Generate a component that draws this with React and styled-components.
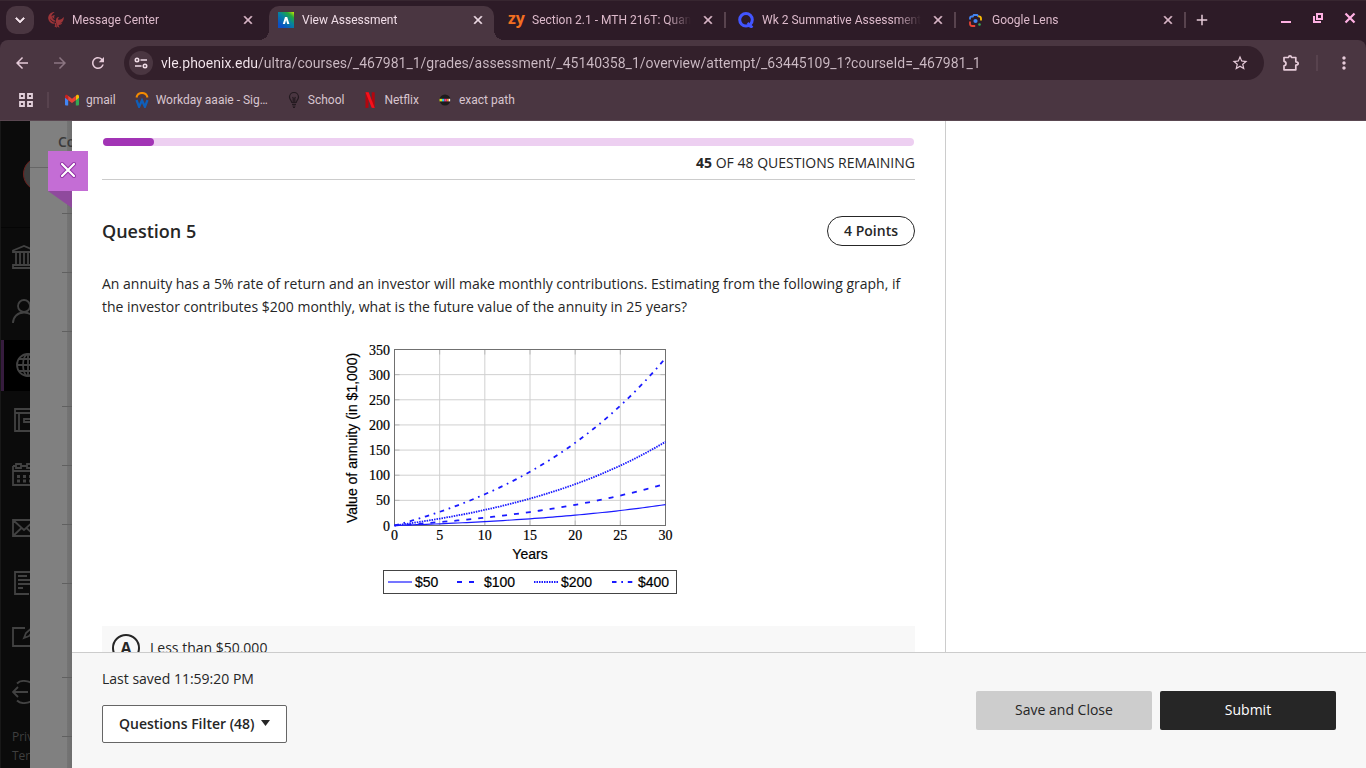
import React from "react";
import styled, { createGlobalStyle } from "styled-components";
import {
  MdAdd,
  MdArrowBack,
  MdArrowForward,
  MdClose,
  MdKeyboardArrowDown,
  MdMoreVert,
  MdRefresh,
  MdStarBorder,
} from "react-icons/md";

const GlobalStyle = createGlobalStyle`
  * {
    box-sizing: border-box;
  }

  body {
    margin: 0;
    font-family: "Open Sans", sans-serif;
    font-size: 14px;
    color: #262626;
  }

  button, input {
    font: inherit;
  }
`;

const Window = styled.div`
  display: flex;
  flex-direction: column;
  height: 100vh;
  overflow: hidden;
`;

/* ---------- browser chrome ---------- */

const Chrome = styled.header`
  background: #2d1b27;
  font-family: Roboto, sans-serif;
  font-size: 12px;
  color: #dcc2d0;
`;

const PlainButton = styled.button`
  display: flex;
  align-items: center;
  justify-content: center;
  flex: none;
  width: ${(p) => p.$w || 24}px;
  height: ${(p) => p.$h || 24}px;
  padding: 0;
  border: 0;
  background: none;
  color: ${(p) => p.$color || "#e6cbd9"};
`;

const TabStrip = styled.div`
  display: flex;
  align-items: stretch;
  height: 40px;
  padding: 0 4px 0 6px;
  border-top: 1px solid #372630;
`;

const TabSearch = styled(PlainButton)`
  margin: 5px 5px 0 0;
  border-radius: 10px;
  background: #4a3641;
  color: #f4e4ec;

  path:last-child {
    stroke-width: 1;
  }
`;

const TabSlot = styled.div`
  display: flex;
  flex: 0 1 230px;
  min-width: 0;
  padding-top: 5px;
`;

const TabBody = styled.div`
  position: relative;
  display: flex;
  align-items: center;
  gap: 8px;
  flex: 1;
  min-width: 0;
  padding: 0 7px 6px 9px;
  border-radius: 10px 10px 0 0;
  background: ${(p) => (p.$active ? "#4a3641" : "none")};
  color: ${(p) => (p.$active ? "#f0dde7" : "#dcb9ca")};

  &::before,
  &::after {
    content: "";
    display: ${(p) => (p.$active ? "block" : "none")};
    position: absolute;
    bottom: 0;
    width: 10px;
    height: 10px;
  }

  &::before {
    left: -10px;
    background: radial-gradient(circle at 0 0, transparent 10px, #4a3641 10px);
  }

  &::after {
    right: -10px;
    background: radial-gradient(circle at 100% 0, transparent 10px, #4a3641 10px);
  }
`;

const TabTitle = styled.span`
  flex: 1;
  overflow: hidden;
  white-space: nowrap;
  line-height: 16px;
  mask-image: linear-gradient(to left, transparent, #000 24px);
`;

const TabClose = styled(PlainButton)`
  color: inherit;

  path:last-child {
    stroke-width: 1;
  }
`;

const Divider = styled.span`
  flex: none;
  align-self: center;
  width: 2px;
  height: 16px;
  margin: ${(p) => p.$margin || "0"};
  background: ${(p) => (p.$hidden ? "transparent" : "#58434e")};
`;

const WindowControls = styled.div`
  display: flex;
  align-items: center;
  gap: 8px;
  height: 33px;
  margin-left: auto;
`;

const Toolbar = styled.div`
  display: flex;
  align-items: center;
  height: 46px;
  padding: 0 10px;
  border-radius: 8px 8px 0 0;
  background: #4a3641;
`;

const NavButtons = styled.div`
  display: flex;
  gap: 14px;
  margin-right: 14px;
`;

const Omnibox = styled.div`
  display: flex;
  align-items: center;
  flex: 1;
  height: 34px;
  padding: 0 12px 0 5px;
  border-radius: 17px;
  background: #33202b;
`;

const SiteInfo = styled(PlainButton)`
  margin-right: 8px;
  border-radius: 50%;
  background: #4a3641;
`;

const UrlInput = styled.input`
  flex: 1;
  min-width: 0;
  padding: 0;
  border: 0;
  outline: 0;
  font-size: 14px;
  line-height: 20px;
  color: transparent;
  background: linear-gradient(to right, #f6e8ef 97px, #cdbbc5 97px);
  background-clip: text;
`;

const Bookmarks = styled.nav`
  display: flex;
  align-items: center;
  gap: 18px;
  height: 35px;
  padding: 0 18px 7px;
  border-bottom: 1px solid #5a4751;
  background: #4a3641;
`;

const Bookmark = styled.a`
  display: flex;
  align-items: center;
  gap: 6px;
  line-height: 16px;
  color: #d8c5cf;
  text-decoration: none;
`;

function PhoenixIcon() {
  return (
    <svg width="16" height="16" viewBox="0 0 16 16" fill="#9c3438">
      <path d="M5.800 0C2.500.4 0 3.200.2 6.500.4 9 2.500 11.300 5.500 12l.8-1.200C4 10 2.300 8.500 2 6.500 3.200 8.600 5 9.600 6.800 9.800L7.200 8.500C5 7.800 4 6.300 4.400 4.300 4.700 5.800 5.500 6.500 6.500 6.700 6 5.500 6 4.200 6.800 3 5.500 3.100 4.200 3.600 3.300 4.500 3.700 2.500 4.800 1 6.500.5z" />
      <path d="M7.500 9.500C8.200 8.500 8 7.300 8.500 6.300 9 5.300 10 5 11.300 5.700L10 6.500c-.2 1 .3 1.400 1.200 1.300 1.700-.2 3.300-1.200 4.600-2.800.3 3-1.300 5.300-3.800 6.300 1.200.1 1.800-.2 2.500-.8-.8 1.800-2.300 2.600-4 2.500l1 2.700-2.200-1-.4-2.200z" />
      <path d="M6 10.500l2.300.8.700 4.500-2.500-1.200.8-1.600z" />
    </svg>
  );
}

function BlackboardIcon() {
  return (
    <svg width="16" height="16" viewBox="0 0 16 16">
      <defs>
        <linearGradient id="bb" x1="1" y1="0" x2="0.250" y2="0.900">
          <stop offset="0" stopColor="#d2ea00" />
          <stop offset="0.250" stopColor="#23a83c" />
          <stop offset="0.550" stopColor="#0683a0" />
          <stop offset="1" stopColor="#0b50c4" />
        </linearGradient>
      </defs>
      <path d="M0 0h16v16H0z" fill="url(#bb)" />
      <path d="M4.800 12L7 5h2.200l2.200 7H9.200L8.100 8l-1.100 4z" fill="#fff" />
    </svg>
  );
}

const ZyMark = styled.span`
  width: 16px;
  height: 24px;
  font-family: "Open Sans", sans-serif;
  font-size: 16px;
  font-weight: 700;
  line-height: 20px;
  color: #f26f21;
`;

function QIcon() {
  return (
    <svg width="16" height="16" viewBox="0 0 16 16" fill="none" stroke="#4255ff" strokeWidth="3">
      <circle cx="8" cy="7.800" r="6.300" />
      <path d="M10 13.300l4.500 2.200M9.500 11l5 4.500" strokeWidth="2.400" />
    </svg>
  );
}

function LensIcon() {
  return (
    <svg width="16" height="16" viewBox="0 0 16 16" fill="none" strokeWidth="1.800">
      <path d="M2 7.500V6.200Q2 4.500 3.700 4.500h1.100l1-1.500h3.400l1 1.500" stroke="#4285f4" />
      <path d="M10.200 4.400h.6q2.200 0 2.200 2.200v2" stroke="#fbbc04" />
      <path d="M2 9.500v2.300Q2 14 4.200 14h3" stroke="#ea4335" />
      <circle cx="7.500" cy="9" r="2.100" fill="#4285f4" />
      <circle cx="11.500" cy="12.500" r="1.300" fill="#34a853" />
    </svg>
  );
}

function TuneIcon() {
  return (
    <svg width="14" height="14" viewBox="0 0 14 14" fill="none" stroke="#f0dde7" strokeWidth="1.600">
      <circle cx="3" cy="4" r="1.700" />
      <path d="M6.500 4H13M1 10h6.500" />
      <circle cx="11" cy="10" r="1.700" />
    </svg>
  );
}

function PuzzleIcon() {
  return (
    <svg width="18" height="18" viewBox="0 0 18 18" fill="none" stroke="#e6cbd9" strokeWidth="1.700" strokeLinejoin="round">
      <path d="M2 3.500h4.500Q6.700 1.800 8 1.800t1.500 1.700h4.300v4.300q2.400.2 2.400 1.700t-2.400 1.700v4.600H2v-4q2-.3 2-2.300T2 7.300z" />
    </svg>
  );
}

function AppsIcon() {
  return (
    <svg width="16" height="16" viewBox="0 0 16 16" fill="none" stroke="#e2d0da" strokeWidth="1.800">
      <path d="M2 2h4v4H2zM10 2h4v4h-4zM2 10h4v4H2zM10 10h4v4h-4z" />
    </svg>
  );
}

function GmailIcon() {
  return (
    <svg width="16" height="16" viewBox="0 0 16 16">
      <path d="M1 4v8.500q0 1 1 1h2.200V6.500z" fill="#4285f4" />
      <path d="M15 4v8.500q0 1-1 1h-2.200V6.500z" fill="#34a853" />
      <path d="M11.800 4v4.200L15 5.800V4.300c0-1.600-1.500-2-2.400-1.300z" fill="#fbbc04" />
      <path d="M1 4.300v1.500l3.200 2.400V4l-.8-1C2.300 2.200 1 2.800 1 4.300z" fill="#c5221f" />
      <path d="M4.200 3.800L8 6.700l3.800-2.900v4.400L8 11 4.200 8.200z" fill="#ea4335" />
    </svg>
  );
}

function WorkdayIcon() {
  return (
    <svg width="16" height="16" viewBox="0 0 16 16" fill="none">
      <path d="M2.500 5.500a5.600 5.600 0 0 1 11 0" stroke="#f38b00" strokeWidth="2" />
      <path d="M2.500 8l2.600 6.800L8 8.300l2.900 6.500L13.500 8" stroke="#0f5fb9" strokeWidth="2.300" />
    </svg>
  );
}

function BulbIcon() {
  return (
    <svg width="16" height="16" viewBox="0 0 16 16" fill="none" stroke="#241a20" strokeWidth="1.200">
      <path d="M5.800 10.500C5.600 8.300 3.500 7.600 3.500 5a4.500 4.500 0 0 1 9 0c0 2.600-2.100 3.300-2.300 5.500zM6 12.300h4M6.500 14h3M7.200 10V6M8.800 10V6M6.500 5l1 1.500M9.500 5l-1 1.500" />
      <path d="M7 15.300h2" />
    </svg>
  );
}

function NetflixIcon() {
  return (
    <svg width="16" height="16" viewBox="0 0 16 16">
      <path d="M3.500.3h3v15.400l-3 .3zM9.700.3h3V16l-3-.3z" fill="#b1060f" />
      <path d="M3.500.3h3.200L12.700 16l-3-.3z" fill="#f5101b" />
    </svg>
  );
}

function ExactPathIcon() {
  return (
    <svg width="16" height="16" viewBox="0 0 16 16">
      <circle cx="8" cy="8" r="5.500" fill="#1d1a1c" />
      <path d="M2.500 6.800H5v2.600H2.500z" fill="#d8e021" />
      <path d="M5 6.800h2.300v2.600H5z" fill="#29c5e6" />
      <path d="M7.300 6.800h2.300v2.600H7.300z" fill="#f0369b" />
      <path d="M9.600 6.800h2v2.600h-2z" fill="#ff7a2f" />
      <path d="M11.600 6.800h1.600v2.600h-1.600z" fill="#f8f8f8" />
    </svg>
  );
}

const tabs = [
  { title: "Message Center", icon: <PhoenixIcon /> },
  { title: "View Assessment", icon: <BlackboardIcon />, active: true },
  {
    title: "Section 2.1 - MTH 216T: Quantitative",
    icon: <ZyMark>zy</ZyMark>,
    divider: true,
  },
  { title: "Wk 2 Summative Assessment", icon: <QIcon />, divider: true },
  { title: "Google Lens", icon: <LensIcon />, divider: true },
];

const bookmarks = [
  { title: "gmail", icon: <GmailIcon /> },
  { title: "Workday aaaie - Sig…", icon: <WorkdayIcon /> },
  { title: "School", icon: <BulbIcon /> },
  { title: "Netflix", icon: <NetflixIcon /> },
  { title: "exact path", icon: <ExactPathIcon /> },
];

function BrowserChrome() {
  return (
    <Chrome>
      <TabStrip>
        <TabSearch $w={28} $h={28} aria-label="Search tabs">
          <MdKeyboardArrowDown size={18} />
        </TabSearch>
        {tabs.map((tab) => (
          <TabSlot key={tab.title}>
            <TabBody $active={tab.active}>
              {tab.icon}
              <TabTitle>{tab.title}</TabTitle>
              <TabClose $w={18} $h={18} aria-label="Close tab">
                <MdClose size={14} />
              </TabClose>
            </TabBody>
            <Divider $hidden={!tab.divider} $margin="0 3px 7px 0" />
          </TabSlot>
        ))}
        <PlainButton $w={26} $h={38} aria-label="New tab">
          <MdAdd size={18} />
        </PlainButton>
        <WindowControls>
          <PlainButton $color="#ffb1e3" aria-label="Minimize">
            <svg width="12" height="12" viewBox="0 0 12 12" fill="currentColor">
              <path d="M1 9h10v2H1z" />
            </svg>
          </PlainButton>
          <PlainButton $color="#ffb1e3" aria-label="Restore">
            <svg width="12" height="12" viewBox="0 0 12 12" fill="none" stroke="currentColor" strokeWidth="2">
              <path d="M5 2h5v5H5z" />
              <path d="M2 4v6h7" />
            </svg>
          </PlainButton>
          <PlainButton $color="#ffb1e3" aria-label="Close window">
            <svg width="12" height="12" viewBox="0 0 12 12" stroke="currentColor" strokeWidth="2.200">
              <path d="M1.500 1.500l9 9M10.500 1.500l-9 9" />
            </svg>
          </PlainButton>
        </WindowControls>
      </TabStrip>
      <Toolbar>
        <NavButtons>
          <PlainButton aria-label="Back">
            <MdArrowBack size={18} />
          </PlainButton>
          <PlainButton $color="#8c7682" aria-label="Forward">
            <MdArrowForward size={18} />
          </PlainButton>
          <PlainButton aria-label="Reload">
            <MdRefresh size={18} />
          </PlainButton>
        </NavButtons>
        <Omnibox>
          <SiteInfo aria-label="Site information">
            <TuneIcon />
          </SiteInfo>
          <UrlInput
            aria-label="Address"
            defaultValue="vle.phoenix.edu/ultra/courses/_467981_1/grades/assessment/_45140358_1/overview/attempt/_63445109_1?courseId=_467981_1"
          />
          <PlainButton aria-label="Bookmark this page">
            <MdStarBorder size={18} />
          </PlainButton>
        </Omnibox>
        <PlainButton $w={54} aria-label="Extensions">
          <PuzzleIcon />
        </PlainButton>
        <Divider $margin="0 14px 0 -2px" />
        <PlainButton aria-label="Menu">
          <MdMoreVert size={20} />
        </PlainButton>
      </Toolbar>
      <Bookmarks>
        <PlainButton $w={16} $h={16} aria-label="Apps">
          <AppsIcon />
        </PlainButton>
        <Divider $margin="0 -3px 0 -5px" />
        {bookmarks.map((b) => (
          <Bookmark key={b.title} href="#">
            {b.icon}
            {b.title}
          </Bookmark>
        ))}
      </Bookmarks>
    </Chrome>
  );
}

/* ---------- page behind the panel ---------- */

const Page = styled.div`
  display: flex;
  flex: 1;
  min-height: 0;
`;

const Sidebar = styled.nav`
  display: flex;
  flex-direction: column;
  flex: none;
  width: 30px;
  overflow: hidden;
  background: #0b0b0b;
  border-left: 1px solid #181818;
`;

const Profile = styled.div`
  height: 107px;
  padding: 36px 0 0 22px;
  border-bottom: 1px solid #050505;
`;

const Avatar = styled.div`
  width: 34px;
  height: 34px;
  border: 1px solid #6b1f1c;
  border-radius: 50%;
  background: #3c3c3c;
`;

const SideLinks = styled.div`
  display: flex;
  flex-direction: column;
  justify-content: space-between;
  flex: 1;
  padding: 3px 0 10px;
`;

const SideLink = styled.a`
  display: flex;
  align-items: center;
  height: 51px;
  margin-left: -1px;
  padding-left: ${(p) => (p.$active ? 8 : 12)}px;
  border-left: ${(p) => (p.$active ? "4px solid #361c3e" : "0")};
  background: ${(p) => (p.$active ? "#000" : "none")};

  svg {
    flex: none;
  }
`;

const SideFooter = styled.div`
  padding: 0 0 3px 11px;
  font-size: 12px;
  line-height: 19px;
  color: #3f3f3f;
`;

const CourseStrip = styled.div`
  display: flex;
  flex-direction: column;
  flex: none;
  width: 42px;
  overflow: hidden;
  background: linear-gradient(to right, #808080 37px, #747474 37px, #6e6e6e);
`;

const CourseTitle = styled.div`
  flex: none;
  height: 47px;
  padding: 11px 0 0 28px;
  border-bottom: 1px solid #666;
  font-weight: 600;
  line-height: 20px;
  color: #3a3a3a;
`;

const CourseRow = styled.div`
  flex: none;
  height: ${(p) => p.$height}px;
  margin-left: 32px;
  border-bottom: 1px solid #606060;
`;

const courseRows = [46, 59, 59, 75, 59, 59, 59, 94, 59];

const sideIcons = [
  {
    name: "Institution",
    draw: <path d="M1 7v-1.500L12 1l11 4.500V7zM4 7v12M8 7v12M12 7v12M16 7v12M20 7v12M2.500 20h19M1 23h22v-3H1z" />,
  },
  {
    name: "Profile",
    draw: (
      <>
        <circle cx="12" cy="7" r="6" />
        <path d="M1 24c0-6 4.500-10.500 11-10.500S23 18 23 24" />
      </>
    ),
  },
  {
    name: "Courses",
    active: true,
    draw: (
      <>
        <circle cx="16" cy="12" r="11" />
        <ellipse cx="16" cy="12" rx="5" ry="11" />
        <path d="M16 1v22M5 12h22M7 6h18M7 18h18" />
      </>
    ),
  },
  { name: "Organizations", draw: <path d="M3 1h20v22H3zM3 5h20M7 5v18M12 11h8v3h-8z" /> },
  {
    name: "Calendar",
    draw: (
      <>
        <path d="M1 4h3M9 4h6M20 4h3v19H1V4M1 9h22" />
        <path d="M4 2h5v4H4zM15 2h5v4h-5z" />
        <path d="M5 14.500h3M11 14.500h3M17 14.500h3M5 19h3M11 19h3M17 19h3" strokeWidth="3" />
      </>
    ),
  },
  { name: "Messages", draw: <path d="M1 4h22v16H1zM1 4l11 10L23 4M1 20l8.500-8M23 20l-8.500-8" /> },
  {
    name: "Grades",
    draw: <path d="M17 23H3V1h18v17M6 5h9M6 9h12M6 13h12M6 17h5M18 20h4v4" />,
  },
  { name: "Tools", draw: <path d="M13 3H1v18h22V10M12 13l2-5L22 1l2 2-7 8z" /> },
  {
    name: "Sign out",
    draw: <path d="M1 12h15M6 7l-5 5 5 5M5 3.500C9-.5 23-1 23 12S9 24.500 5 20.500" />,
  },
];

function Backdrop() {
  return (
    <>
      <Sidebar>
        <Profile>
          <Avatar />
        </Profile>
        <SideLinks>
          {sideIcons.map((icon) => (
            <SideLink key={icon.name} href="#" aria-label={icon.name} $active={icon.active}>
              <svg width="24" height="24" viewBox="0 0 24 24" fill="none" stroke="#424242" strokeWidth="1.800">
                {icon.draw}
              </svg>
            </SideLink>
          ))}
        </SideLinks>
        <SideFooter>
          Privacy
          <br />
          Terms
        </SideFooter>
      </Sidebar>
      <CourseStrip>
        <CourseTitle>Course</CourseTitle>
        {courseRows.map((height, i) => (
          <CourseRow key={i} $height={height} />
        ))}
      </CourseStrip>
    </>
  );
}

/* ---------- assessment panel ---------- */

const Panel = styled.section`
  position: relative;
  display: flex;
  flex-direction: column;
  flex: 1;
  min-width: 0;
  background: #fff;
`;

const PanelClose = styled.button`
  position: absolute;
  top: 30px;
  left: -24px;
  display: flex;
  align-items: center;
  justify-content: center;
  width: 40px;
  height: 40px;
  padding: 0 0 2px;
  border: 0;
  background: #c46dd5;

  &::after {
    content: "";
    position: absolute;
    top: 40px;
    left: 0;
    border-top: 17px solid #8f4a9d;
    border-left: 24px solid transparent;
  }
`;

const Content = styled.div`
  display: flex;
  flex: 1;
  min-height: 0;
  overflow: hidden;
`;

const Main = styled.main`
  flex: 1;
  padding: 17px 30px 0;
`;

const Aside = styled.aside`
  flex: none;
  width: 421px;
  border-left: 1px solid #ccc;
`;

const Progress = styled.div`
  height: 8px;
  margin: 0 1px;
  border-radius: 4px;
  background: #edcff1;
`;

const ProgressFill = styled.div`
  height: 8px;
  border-radius: 4px;
  background: #a234b5;
`;

const Remaining = styled.p`
  margin: 7px 0 0;
  padding-bottom: 6px;
  border-bottom: 1px solid #ccc;
  line-height: 20px;
  text-align: right;
`;

const QuestionHeader = styled.div`
  display: flex;
  align-items: center;
  justify-content: space-between;
  margin-top: 36px;
`;

const QuestionTitle = styled.h2`
  margin: 0;
  font-size: 18px;
  font-weight: 600;
  line-height: 24px;
`;

const Points = styled.span`
  padding: 0 16px;
  border: 1px solid #262626;
  border-radius: 15px;
  font-weight: 600;
  line-height: 28px;
`;

const QuestionText = styled.p`
  margin: 26px 0 22px;
  line-height: 23px;
`;

const ChartSvg = styled.svg`
  display: block;
  margin: 0 auto 24px;
`;

const AxisText = styled.text`
  font-family: "Liberation Serif", serif;
  font-size: 14px;
  fill: #000;
  stroke: #000;
  stroke-width: 0.2px;
`;

const ChartLabel = styled.text`
  font-family: "Liberation Sans", sans-serif;
  font-size: 14px;
  fill: #000;
  stroke: #000;
  stroke-width: 0.2px;
`;

const Option = styled.label`
  display: flex;
  align-items: center;
  gap: 10px;
  padding: 8px 10px;
  background: #f8f8f8;
  line-height: 18px;
`;

const OptionRadio = styled.input`
  position: absolute;
  opacity: 0;
`;

const OptionLetter = styled.span`
  display: flex;
  align-items: center;
  justify-content: center;
  width: 28px;
  height: 28px;
  border: 2px solid #262626;
  border-radius: 50%;
  font-size: 16px;
  font-weight: 700;
`;

const Footer = styled.footer`
  display: flex;
  align-items: center;
  justify-content: space-between;
  padding: 16px 30px 25px;
  border-top: 1px solid #ccc;
  background: #f7f7f7;
`;

const Saved = styled.p`
  margin: 0 0 16px;
  line-height: 20px;
`;

const FilterButton = styled.button`
  display: flex;
  align-items: center;
  gap: 6px;
  height: 38px;
  padding: 0 16px 2px;
  border: 1px solid #666;
  border-radius: 2px;
  background: #fff;
  color: #262626;
  font-weight: 600;
`;

const Actions = styled.div`
  display: flex;
  gap: 8px;
  padding-top: 9px;
`;

const ActionButton = styled.button`
  width: 176px;
  height: 39px;
  padding: 0 0 2px;
  border: 0;
  border-radius: 2px;
  background: ${(p) => (p.$primary ? "#262626" : "#cdcdcd")};
  color: ${(p) => (p.$primary ? "#fff" : "#262626")};
`;

const plot = { left: 56.5, right: 327.5, top: 9.5, bottom: 185.5 };
const xAt = (years) => plot.left + (years / 30) * (plot.right - plot.left);
const yAt = (value) => plot.bottom - (value / 350) * (plot.bottom - plot.top);

// future value, in thousands, of a monthly payment at 5% a year
const futureValue = (payment, years) => {
  const rate = 0.05 / 12;
  return (payment * (Math.pow(1 + rate, years * 12) - 1)) / rate / 1000;
};

const curve = (payment) =>
  Array.from({ length: 61 }, (_, i) => {
    const years = i / 2;
    return `${i ? "L" : "M"}${xAt(years)} ${yAt(futureValue(payment, years))}`;
  }).join("");

const series = [
  { payment: 50, dash: "none", width: 1.2, x: 50, labelX: 77 },
  { payment: 100, dash: "5 7", width: 1.8, x: 119, labelX: 146 },
  { payment: 200, dash: "1.5 1", width: 1.8, x: 196, labelX: 223 },
  { payment: 400, dash: "4.5 4.8 1.7 4.8", width: 1.8, x: 274, labelX: 300 },
];

const xTicks = [0, 5, 10, 15, 20, 25, 30];
const yTicks = [0, 50, 100, 150, 200, 250, 300, 350];

function AnnuityChart() {
  return (
    <ChartSvg width="341" height="262" viewBox="0 0 341 262" role="img" aria-label="Value of annuity by years">
      {xTicks.map((t) => (
        <g key={t}>
          <path d={`M${xAt(t)} ${plot.top}V${plot.bottom}`} stroke="#d0d0d0" />
          <path
            d={`M${xAt(t)} ${plot.top}v5M${xAt(t)} ${plot.bottom}v-5`}
            stroke="#a0a0a0"
            strokeWidth="0.6"
          />
          <AxisText x={xAt(t)} y="200" textAnchor="middle">
            {t}
          </AxisText>
        </g>
      ))}
      {yTicks.map((t) => (
        <g key={t}>
          <path d={`M${plot.left} ${yAt(t)}H${plot.right}`} stroke="#d0d0d0" />
          <path
            d={`M${plot.left} ${yAt(t)}h5M${plot.right} ${yAt(t)}h-5`}
            stroke="#a0a0a0"
            strokeWidth="0.6"
          />
          <AxisText x="52" y={yAt(t) + 5} textAnchor="end">
            {t}
          </AxisText>
        </g>
      ))}
      <rect
        x={plot.left}
        y={plot.top}
        width={plot.right - plot.left}
        height={plot.bottom - plot.top}
        fill="none"
        stroke="#707070"
      />
      {series.map((s) => (
        <path
          key={s.payment}
          d={curve(s.payment)}
          fill="none"
          stroke="#1a1aff"
          strokeWidth={s.width}
          strokeDasharray={s.dash}
        />
      ))}
      <ChartLabel x="192" y="219" textAnchor="middle">
        Years
      </ChartLabel>
      <ChartLabel transform="translate(18.500 98) rotate(-90)" textAnchor="middle">
        Value of annuity (in $1,000)
      </ChartLabel>
      <rect x="45.5" y="230.5" width="293" height="23" fill="#fff" stroke="#444" />
      {series.map((s) => (
        <g key={s.payment}>
          <path
            d={`M${s.x} 242h24`}
            stroke="#1a1aff"
            strokeWidth={s.width}
            strokeDasharray={s.dash}
          />
          <ChartLabel x={s.labelX} y="247">
            ${s.payment}
          </ChartLabel>
        </g>
      ))}
    </ChartSvg>
  );
}

function Assessment() {
  return (
    <Panel>
      <PanelClose aria-label="Close">
        <svg width="18" height="18" viewBox="0 0 18 18" strokeLinecap="round">
          <path d="M3 3l12 12M15 3L3 15" stroke="#8f2fa3" strokeWidth="4" />
          <path d="M3 3l12 12M15 3L3 15" stroke="#fff" strokeWidth="2.200" />
        </svg>
      </PanelClose>
      <Content>
        <Main>
          <Progress>
            <ProgressFill style={{ width: `${(3 / 48) * 100}%` }} />
          </Progress>
          <Remaining>
            <b>45</b> OF 48 QUESTIONS REMAINING
          </Remaining>
          <QuestionHeader>
            <QuestionTitle>Question 5</QuestionTitle>
            <Points>4 Points</Points>
          </QuestionHeader>
          <QuestionText>
            An annuity has a 5% rate of return and an investor will make monthly
            contributions. Estimating from the following graph, if the investor
            contributes $200 monthly, what is the future value of the annuity in
            25 years?
          </QuestionText>
          <AnnuityChart />
          <Option>
            <OptionRadio type="radio" name="answer" />
            <OptionLetter>A</OptionLetter>
            Less than $50,000
          </Option>
        </Main>
        <Aside />
      </Content>
      <Footer>
        <div>
          <Saved>Last saved 11:59:20 PM</Saved>
          <FilterButton>
            Questions Filter (48)
            <svg width="9" height="6" viewBox="0 0 9 6">
              <path d="M0 0h9L4.500 6z" fill="#262626" />
            </svg>
          </FilterButton>
        </div>
        <Actions>
          <ActionButton>Save and Close</ActionButton>
          <ActionButton $primary>Submit</ActionButton>
        </Actions>
      </Footer>
    </Panel>
  );
}

function App() {
  return (
    <Window>
      <GlobalStyle />
      <BrowserChrome />
      <Page>
        <Backdrop />
        <Assessment />
      </Page>
    </Window>
  );
}

export default App;
